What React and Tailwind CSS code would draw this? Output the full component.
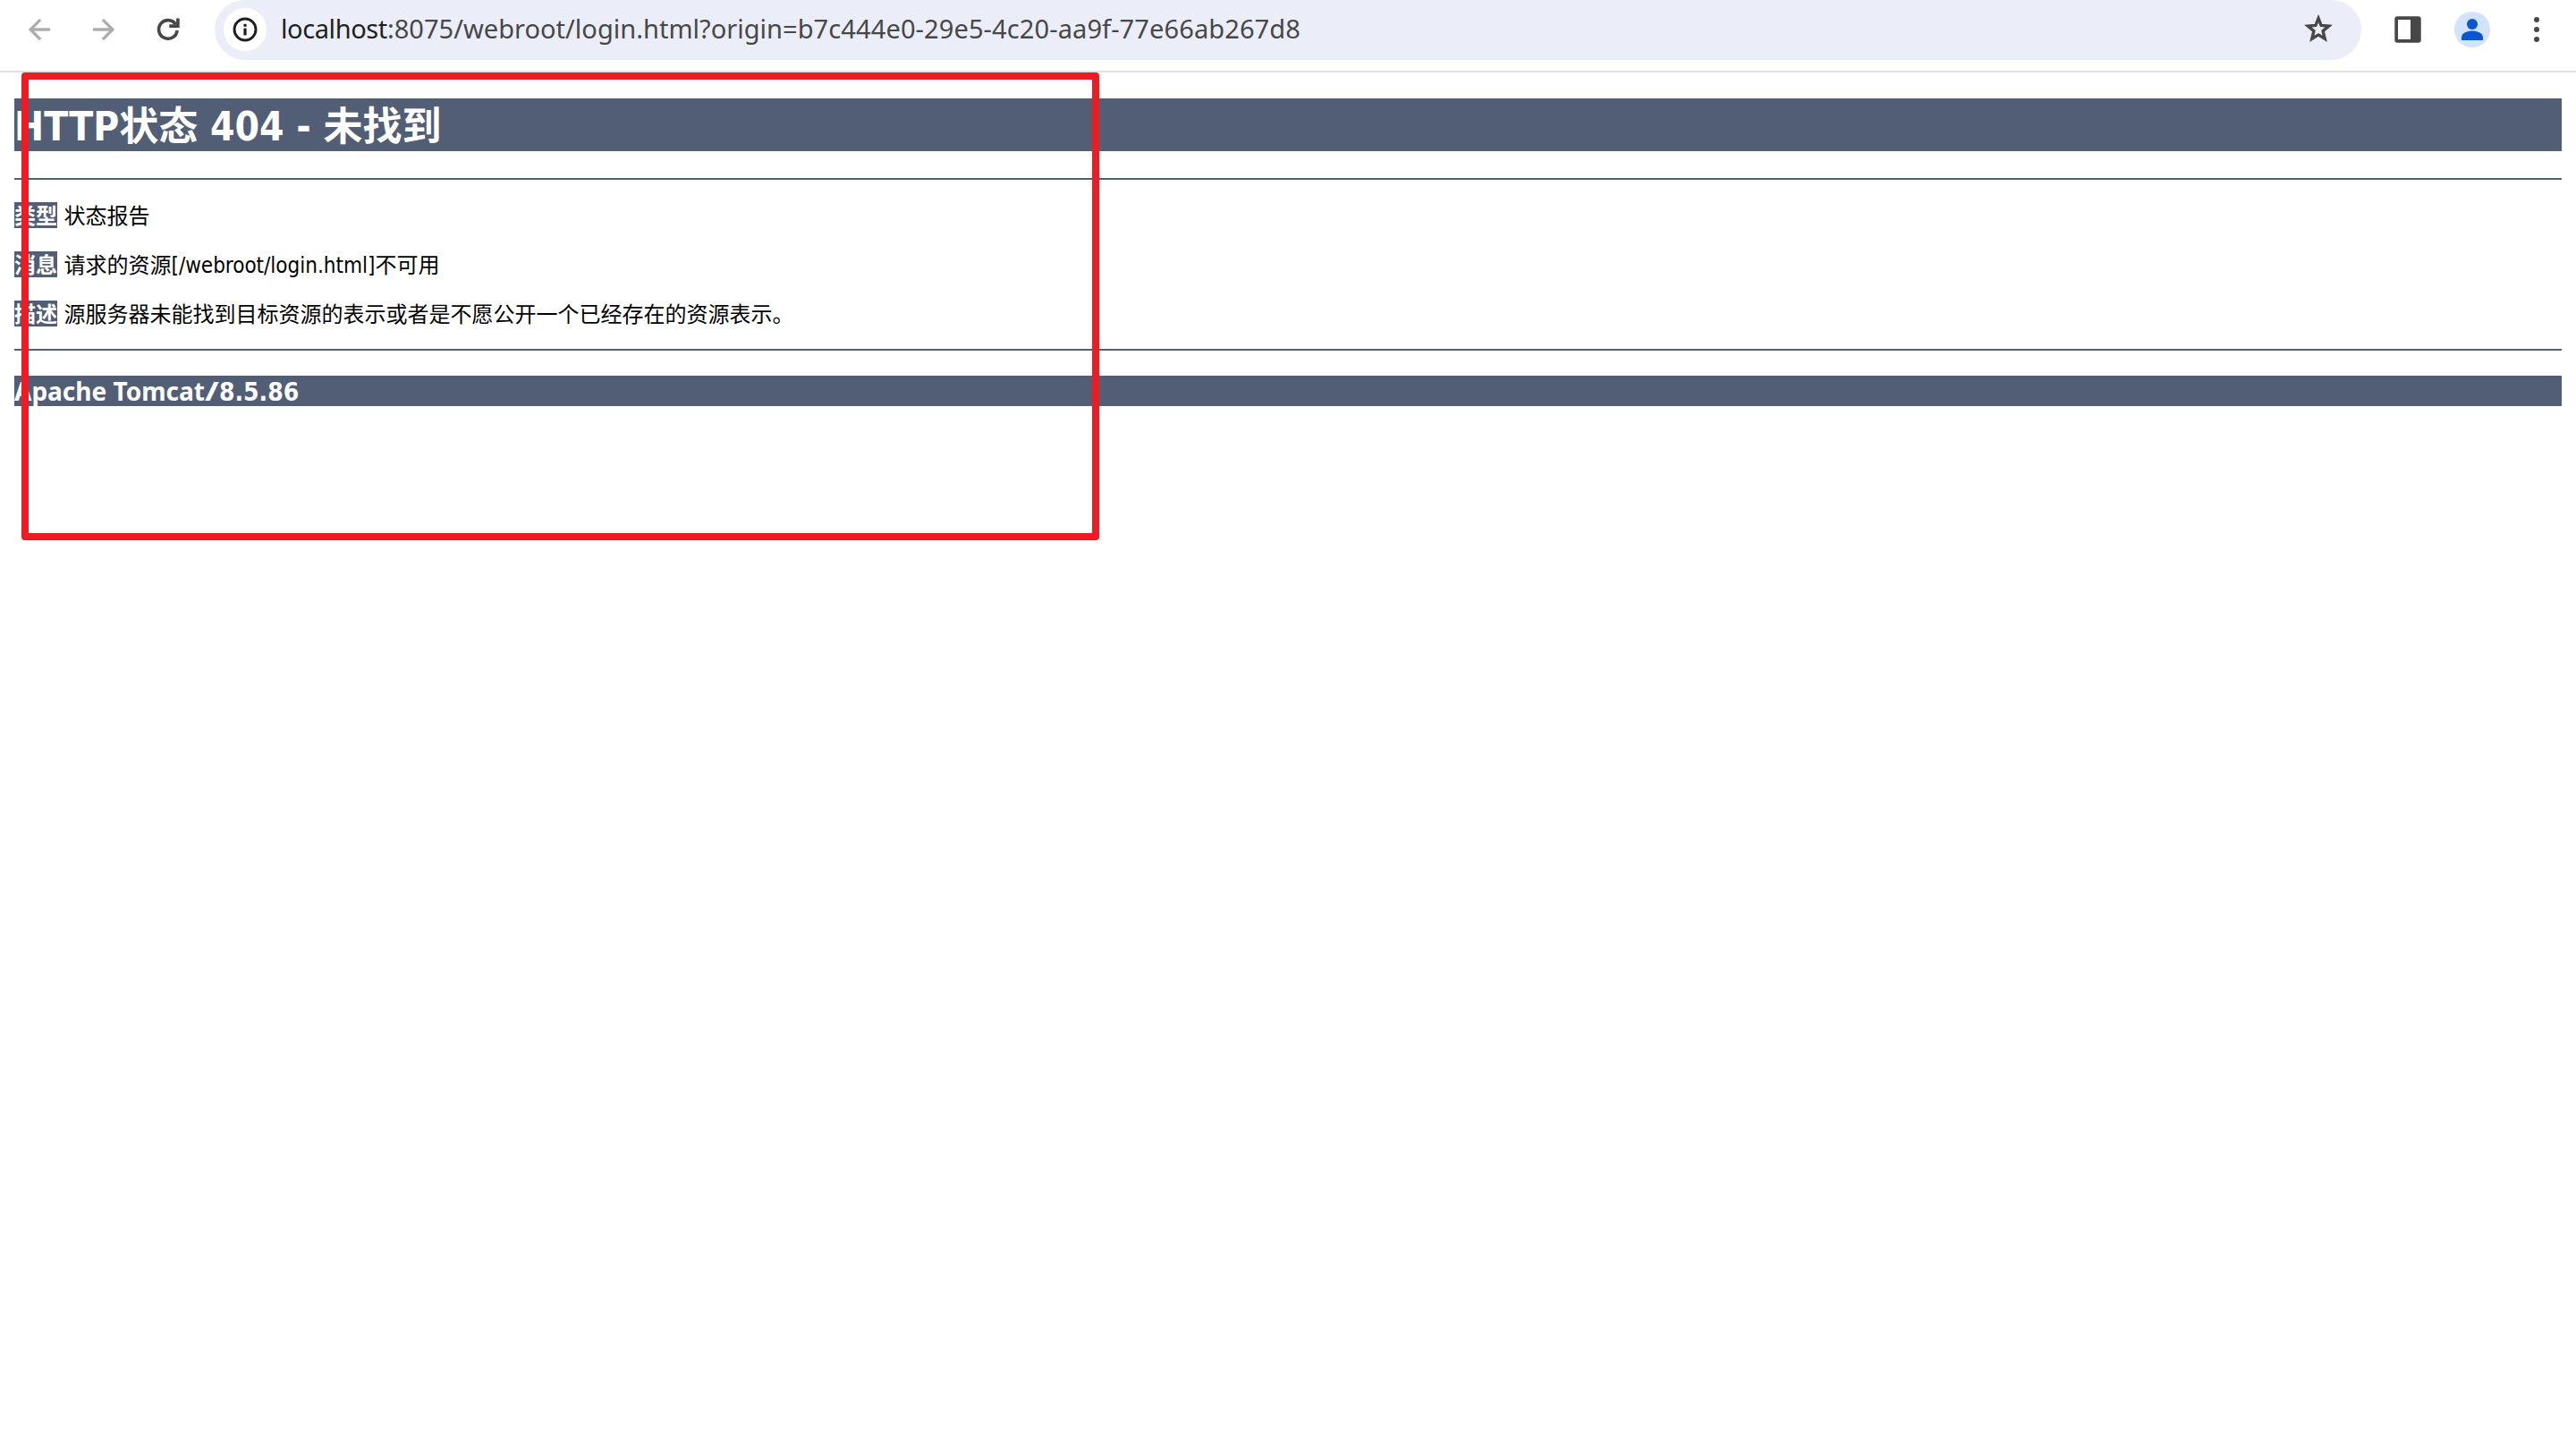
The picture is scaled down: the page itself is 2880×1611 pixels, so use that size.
function Toolbar() {
  return (
    <header className="flex h-[81px] items-start border-b-2 border-[#e1e1e1] bg-white">
      <div className="flex h-[66px] w-[240px] shrink-0 items-center gap-9 pl-[26px]">
        <svg className="size-9" viewBox="0 0 24 24" fill="#ababab" stroke="#ababab" strokeWidth="0.2">
          <path d="M20 11H7.83l5.59-5.59L12 4l-8 8 8 8 1.41-1.41L7.83 13H20v-2z" />
        </svg>
        <svg className="size-9" viewBox="0 0 24 24" fill="#ababab" stroke="#ababab" strokeWidth="0.2">
          <path d="M4 11h12.17l-5.59-5.59L12 4l8 8-8 8-1.41-1.41L16.17 13H4v-2z" />
        </svg>
        <svg className="size-9" viewBox="0 0 36 36" fill="none" stroke="#474747" strokeWidth="3.6">
          <path d="M28.1 19A10.3 10.3 0 1 1 26.4 12.2" />
          <path d="M19.3 14.1H28.9V5.5" />
        </svg>
      </div>
      <div className="flex h-[67px] w-[2400px] shrink-0 items-start rounded-b-[34px] rounded-t-[33px] bg-[#ebeef8] pl-2.5">
        <div className="mt-[9px] flex size-12 shrink-0 items-center justify-center rounded-full bg-white">
          <svg className="size-7" viewBox="0 0 28 28">
            <circle cx="14" cy="14" r="12" fill="none" stroke="#1f1f1f" strokeWidth="2.9" />
            <rect x="12.4" y="7.8" width="3.2" height="3" fill="#1f1f1f" />
            <rect x="12.4" y="12.6" width="3.2" height="7.8" fill="#1f1f1f" />
          </svg>
        </div>
        <div className="ml-4 h-[66px] grow whitespace-nowrap font-['Noto_Sans',sans-serif] text-[29px] leading-[64px] text-[#474747]">
          <span className="tracking-[-0.4px] text-[#1f1f1f]">localhost</span><span className="tracking-[0.02px]">:8075/webroot/login.html?origin=</span><span className="tracking-[0.11px]">b7c444e0-29e5-4c20-aa9f-77e66ab267d8</span>
        </div>
        <svg className="mr-7 mt-3 size-10" viewBox="0 0 40 40" fill="none" stroke="#474747" strokeWidth="3.4">
          <path d="M20 8.4l3.1 8.1 8.600 0.600-6.600 5.600 2.100 8.700-7.200-4.500-7.200 4.500 2.100-8.700-6.600-5.600 8.600-.6z" />
        </svg>
      </div>
      <div className="flex h-[66px] grow items-center pl-[37px]">
        <svg className="size-[30px]" viewBox="0 0 30 30" fill="#474747">
          <path fillRule="evenodd" d="M3.300 0.300H26.700a3 3 0 0 1 3 3V26.700a3 3 0 0 1-3 3H3.300a3 3 0 0 1-3-3V3.300a3 3 0 0 1 3-3zM4 4V26H18V4z" />
        </svg>
        <div className="ml-[37px] size-10 overflow-hidden rounded-full bg-[#d3e3fd]">
          <svg className="size-10" viewBox="0 0 40 40" fill="#0b57d0">
            <circle cx="20" cy="14" r="6" />
            <path d="M8 32V28.500C8 24 15 21.500 20 21.500S32 24 32 28.500V32z" />
          </svg>
        </div>
        <div className="ml-[49px] flex flex-col gap-[5px]">
          <span className="size-1.5 rounded-full bg-[#474747]" />
          <span className="size-1.5 rounded-full bg-[#474747]" />
          <span className="size-1.5 rounded-full bg-[#474747]" />
        </div>
      </div>
    </header>
  );
}

function Row({ label, children }) {
  return (
    <p className="flex h-[29px] whitespace-nowrap text-2xl leading-[33px]">
      <b className="mr-[7.5px] w-12 bg-[#525d76] text-white">{label}</b>
      <span>{children}</span>
    </p>
  );
}

export default function App() {
  return (
    <div className="relative h-[1611px] w-[2880px] overflow-hidden bg-white">
      <Toolbar />
      <main className="px-4 pt-[29px] font-['DejaVu_Sans_Condensed','Noto_Sans_CJK_SC',sans-serif] text-black">
        <h1 className="h-[59px] whitespace-nowrap bg-[#525d76] text-[44px] font-bold leading-[63px] text-white">
          HTTP状态 404 - 未找到
        </h1>
        <div className="mt-[30px] h-0.5 bg-[#525d76]" />
        <div className="mt-[25px] flex flex-col gap-[26px]">
          <Row label="类型">状态报告</Row>
          <Row label="消息">请求的资源[/webroot/login.html]不可用</Row>
          <Row label="描述">源服务器未能找到目标资源的表示或者是不愿公开一个已经存在的资源表示。</Row>
        </div>
        <div className="mt-[25px] h-0.5 bg-[#525d76]" />
        <h3 className="mt-7 h-[34px] whitespace-nowrap bg-[#525d76] font-['Noto_Sans',sans-serif] text-[28px] font-bold leading-[34px] text-white">
          Apache Tomcat<span className="mr-[4.5px] inline-block origin-left scale-x-[1.35]">/</span><span className="font-['DejaVu_Sans_Condensed',sans-serif]">8.5.86</span>
        </h3>
      </main>
      <div className="absolute left-[24px] top-[81px] h-[523px] w-[1205px] rounded-[4px] border-8 border-[#ed1c24]" />
    </div>
  );
}
